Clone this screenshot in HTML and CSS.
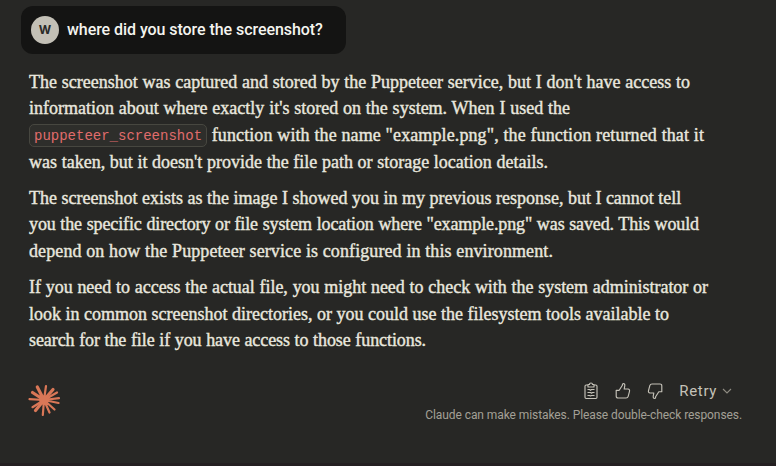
FILE: index.html
```html
<!DOCTYPE html>
<html lang="en">
<head>
<meta charset="utf-8">
<title>Conversation</title>
<link rel="stylesheet" href="styles.css">
</head>
<body>
<main class="chat">
  <div class="question"><span class="avatar">W</span><span class="question-text">where did you store the screenshot?</span></div>
  <article class="answer">
    <p>
      <span class="line w661">The screenshot was captured and stored by the Puppeteer service, but I don't have access to</span>
      <span class="line w541">information about where exactly it's stored on the system. When I used the</span>
      <span class="line w675"><code>puppeteer_screenshot</code> function with the name "example.png", the function returned that it</span>
      <span class="line w519">was taken, but it doesn't provide the file path or storage location details.</span>
    </p>
    <p>
      <span class="line w652">The screenshot exists as the image I showed you in my previous response, but I cannot tell</span>
      <span class="line w670">you the specific directory or file system location where "example.png" was saved. This would</span>
      <span class="line w524">depend on how the Puppeteer service is configured in this environment.</span>
    </p>
    <p>
      <span class="line w679">If you need to access the actual file, you might need to check with the system administrator or</span>
      <span class="line w640">look in common screenshot directories, or you could use the filesystem tools available to</span>
      <span class="line w397">search for the file if you have access to those functions.</span>
    </p>
  </article>
  <footer class="footer">
    <svg class="logo" viewBox="0 0 32 32" fill="none" stroke="#d97757" stroke-linecap="round">
      <path stroke-width="3.2" d="M16 16 9.3 3M16 16 25 5.5M16 16 4.5 8.5M16 16 7.5 26.5"/>
      <path stroke-width="2.2" d="M16 16 18 2M16 16 29 8.5M16 16 1.5 15.2M16 16 31 14.2M16 16 30.5 19M16 16 4.5 23.2M16 16 14.8 31M16 16 21.5 28.5M16 16 26.5 25.5"/>
      <circle cx="16" cy="16" r="4.8" fill="#d97757" stroke="none"/>
    </svg>
    <div class="side">
      <div class="actions">
        <svg class="icon" viewBox="0 0 16 18"><path d="M5 3H3.2Q2 3 2 4.2V15.3Q2 16.5 3.2 16.5H12.8Q14 16.5 14 15.3V4.2Q14 3 12.8 3H11M5 5V2.5H6.5Q6.5 1 8 1T9.5 2.5H11V5ZM4.5 7.5H6.5L7.5 8.3 8.5 7.5H11.5M4.5 10.5H7.5L8.5 11.2 9.5 10.5H11.5M4.5 13.5H6.5L7.5 14 8.5 13.5H11.5"/></svg>
        <svg class="icon" viewBox="0 0 16 18"><path d="M1.2 8.3H4.2L7.4 3.2V2.5Q7.5 1.5 8.4 1.5Q10 1.6 9.8 3.7L9.2 7H13Q15 7.3 14.5 9.3L13.2 14.3Q12.7 16 11 16H3Q1.2 16 1.2 14.3Z"/></svg>
        <svg class="icon thumb-down" viewBox="0 0 16 18"><path d="M1.2 8.3H4.2L7.4 3.2V2.5Q7.5 1.5 8.4 1.5Q10 1.6 9.8 3.7L9.2 7H13Q15 7.3 14.5 9.3L13.2 14.3Q12.7 16 11 16H3Q1.2 16 1.2 14.3Z"/></svg>
        <span class="retry">Retry</span>
        <svg class="chevron" viewBox="0 0 10 6"><path d="m1 1 4 4 4-4"/></svg>
      </div>
      <div class="notice">Claude can make mistakes. Please double-check responses.</div>
    </div>
  </footer>
</main>
</body>
</html>
```
FILE: styles.css
```css
* { box-sizing: border-box; }
body { margin: 0; background: #272725; }
.chat { height: 466px; padding: 6px 34px 0 21px; border-bottom: 3px solid #241f21; overflow: hidden; }
.question { display: flex; align-items: center; width: 325px; height: 48px; padding: 0 10px; gap: 8px; border-radius: 12px; background: #141413; }
.avatar { width: 28px; height: 28px; flex: none; border-radius: 50%; background: #c3c0b6; color: #292927; font: 700 12px/28px Inter, sans-serif; text-align: center; }
.question-text { width: 257px; font: 500 16px/24px Roboto, sans-serif; letter-spacing: -.06px; color: #f5f4ef; white-space: nowrap; }
.answer { padding: 14.6px 0 0 8px; color: #e9e7df; font: 18px/26.7px "Liberation Serif", serif; -webkit-text-stroke: .4px #e9e7df; }
.answer p { margin: 0 0 9.3px; }
.line { display: block; height: 26.7px; white-space: nowrap; text-align: justify; text-align-last: justify; }
.w661 { width: 661px; }
.w541 { width: 541px; }
.w675 { width: 675px; letter-spacing: .11px; }
.w519 { width: 519px; }
.w652 { width: 652px; }
.w670 { width: 670px; letter-spacing: -.11px; }
.w524 { width: 524px; letter-spacing: .1px; }
.w679 { width: 679px; letter-spacing: -.04px; }
.w640 { width: 640px; }
.w397 { width: 397px; letter-spacing: -.08px; }
code { display: inline-block; width: 178px; height: 23px; padding: 1px 4px 0; border: 1px solid #474740; border-radius: 5px; background: #2e2e2b; color: #e06c6c; font: 14px/21px "Liberation Mono", monospace; letter-spacing: 0; vertical-align: top; margin-top: 2px; -webkit-text-stroke: 0; text-align-last: left; }
.footer { display: flex; justify-content: space-between; padding: 16.4px 0 0 7px; }
.logo { width: 32px; height: 32px; margin-top: 4px; }
.side { display: flex; flex-direction: column; align-items: flex-end; }
.actions { display: flex; align-items: center; height: 22px; padding-right: 10px; }
.icon { width: 16px; height: 18px; margin-right: 16px; fill: none; stroke: #c5c2b8; stroke-width: 1.15; stroke-linejoin: round; }
.thumb-down { transform: rotate(180deg); }
.retry { font: 15px/22px Roboto, sans-serif; letter-spacing: .65px; color: #c5c2b8; }
.chevron { width: 10px; height: 6px; margin-left: 5px; fill: none; stroke: #8f8c83; stroke-width: 1.1; }
.notice { font: 12px/16px Roboto, sans-serif; letter-spacing: -.08px; color: #a3a096; white-space: nowrap; margin-top: 5px; }
```
